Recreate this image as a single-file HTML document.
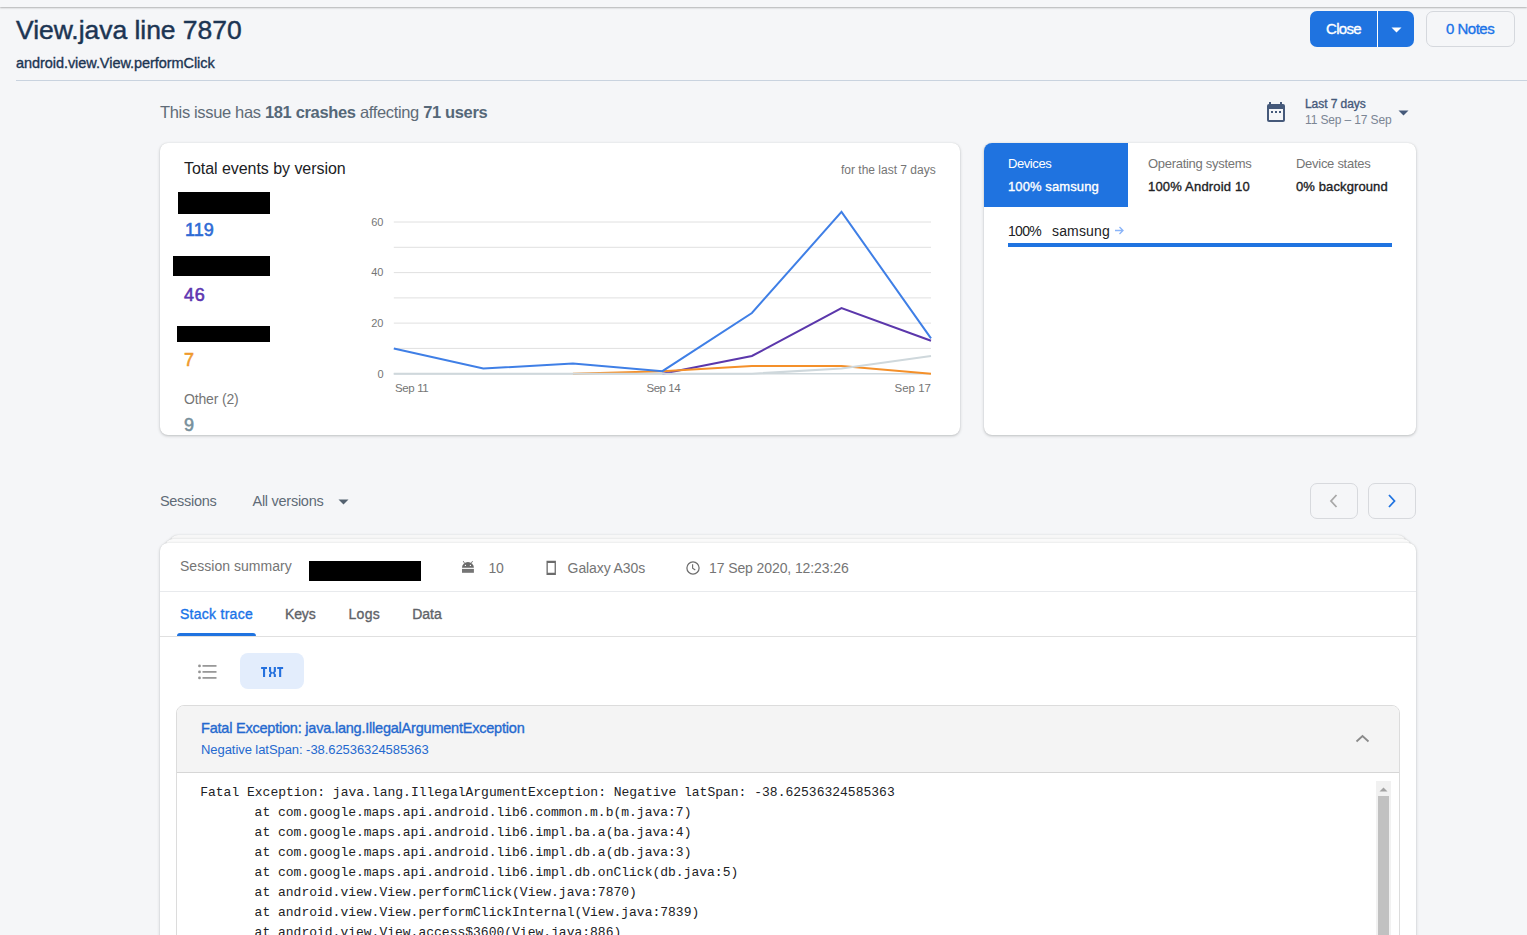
<!DOCTYPE html>
<html><head><meta charset="utf-8">
<style>
html,body{margin:0;padding:0;}
body{width:1527px;height:935px;overflow:hidden;background:#f5f6f8;font-family:"Liberation Sans",sans-serif;position:relative;}
.abs{position:absolute;}
.t{position:absolute;white-space:pre;}
.t b{font-weight:bold;color:#566878}
.topbar{left:0;top:0;width:1527px;height:7px;background:#f5f6f8;box-shadow:0 1px 2px rgba(0,0,0,.28);z-index:2}
.hr{left:16px;top:80px;width:1511px;height:1px;background:#c9d3df}
.btnc{left:1310px;top:11px;width:104px;height:36px;background:#1f73e0;border-radius:7px}
.btnsep{left:1377px;top:11px;width:1px;height:36px;background:#fff}
.notes{left:1426px;top:11px;width:87px;height:34px;border:1px solid #d5d8dd;border-radius:7px}
.card{background:#fff;border-radius:8px;box-shadow:0 1px 3px rgba(60,64,67,.3),0 0 1px rgba(60,64,67,.15)}
.blk{background:#000}
.navbtn{width:46px;height:34px;border:1px solid #d7d9dd;border-radius:7px}
</style></head><body>
<div class="abs topbar"></div>
<div class="abs hr"></div>
<div class="abs btnc"></div>
<div class="abs btnsep"></div>
<svg class="abs" style="left:1391px;top:27px" width="11" height="6"><path d="M0.5 0.5h10l-5 5z" fill="#fff"/></svg>
<div class="abs notes"></div>

<!-- calendar -->
<svg class="abs" style="left:1266px;top:101px" width="21" height="22" viewBox="0 0 21 22">
<rect x="3" y="1" width="2" height="3" fill="#45597a"/><rect x="14" y="1" width="2" height="3" fill="#45597a"/>
<rect x="1" y="3" width="18" height="18" rx="2" fill="#45597a"/>
<rect x="3" y="8" width="14" height="11" fill="#f5f6f8"/>
<rect x="5" y="10" width="2" height="2" fill="#45597a"/><rect x="9" y="10" width="2" height="2" fill="#45597a"/><rect x="13" y="10" width="2" height="2" fill="#45597a"/>
</svg>
<svg class="abs" style="left:1398px;top:110px" width="11" height="6"><path d="M0.5 0.5h10l-5 5z" fill="#45597a"/></svg>

<!-- card 1 -->
<div class="abs card" style="left:160px;top:143px;width:800px;height:292px"></div>
<div class="abs blk" style="left:178px;top:192px;width:92px;height:22px"></div>
<div class="abs blk" style="left:173px;top:256px;width:97px;height:20px"></div>
<div class="abs blk" style="left:177px;top:326px;width:93px;height:16px"></div>

<!-- card 2 -->
<div class="abs card" style="left:984px;top:143px;width:432px;height:292px;overflow:hidden">
  <div class="abs" style="left:0;top:0;width:144px;height:64px;background:#1f73e0"></div>
</div>
<svg class="abs" style="left:1114px;top:225px" width="11" height="11" viewBox="0 0 11 11"><path d="M1 5.5h8M5.5 2l3.5 3.5-3.5 3.5" stroke="#8ab4f8" stroke-width="1.3" fill="none"/></svg>
<div class="abs" style="left:1008px;top:243px;width:384px;height:4px;background:#1f73e0"></div>

<!-- sessions header -->
<svg class="abs" style="left:338px;top:499px" width="11" height="6"><path d="M0.5 0.5h10l-5 5z" fill="#546270"/></svg>
<div class="abs navbtn" style="left:1310px;top:483px"></div>
<div class="abs navbtn" style="left:1368px;top:483px"></div>
<svg class="abs" style="left:1326px;top:492px" width="16" height="18" viewBox="0 0 16 18"><path d="M10.5 3l-5.5 6 5.5 6" stroke="#a8a8a8" stroke-width="1.8" fill="none"/></svg>
<svg class="abs" style="left:1384px;top:492px" width="16" height="18" viewBox="0 0 16 18"><path d="M5 3l5.5 6-5.5 6" stroke="#1f73e0" stroke-width="1.8" fill="none"/></svg>

<!-- stacked session card -->
<div class="abs card" style="left:170px;top:535px;width:1236px;height:30px;border-radius:8px;background:#f7f7f7"></div>
<div class="abs card" style="left:165px;top:539px;width:1246px;height:30px;border-radius:8px;background:#fafafa"></div>
<div class="abs card" style="left:160px;top:543px;width:1256px;height:420px;border-radius:8px 8px 0 0"></div>
<div class="abs" style="left:160px;top:591px;width:1256px;height:1px;background:#e8eaed"></div>
<div class="abs" style="left:160px;top:636px;width:1256px;height:1px;background:#e0e0e0"></div>
<div class="abs" style="left:177px;top:633px;width:79px;height:3px;background:#1f73e0;border-radius:3px 3px 0 0"></div>
<div class="abs blk" style="left:309px;top:561px;width:112px;height:20px"></div>

<!-- android icon -->
<svg class="abs" style="left:456px;top:555px" width="26" height="25" viewBox="0 0 26 25">
<path d="M7.2 6.1l1.5 2.3M16.6 6.1l-1.5 2.3" stroke="#6b6b6b" stroke-width="0.9"/>
<path d="M6 12.7A5.95 5.6 0 0 1 17.9 12.7Z" fill="#6b6b6b"/>
<circle cx="9.4" cy="10.4" r="0.65" fill="#fff"/><circle cx="14.4" cy="10.4" r="0.65" fill="#fff"/>
<rect x="6" y="13.9" width="11.9" height="3.9" fill="#757575"/>
</svg>
<!-- phone icon -->
<svg class="abs" style="left:540px;top:555px" width="26" height="25" viewBox="0 0 26 25">
<path fill-rule="evenodd" fill="#6b6b6b" d="M6.5 5.8H15.9V19.9H6.5Z M7.8 7.9V17.8H14.6V7.9Z"/>
</svg>
<!-- clock icon -->
<svg class="abs" style="left:685px;top:560px" width="16" height="16" viewBox="0 0 16 16">
<circle cx="8" cy="8" r="6.1" stroke="#6e6e6e" stroke-width="1.25" fill="none"/>
<path d="M7.6 4.3V8.3l2.7 1.8" stroke="#6e6e6e" stroke-width="1.15" fill="none"/>
</svg>
<!-- list icon -->
<svg class="abs" style="left:192px;top:658px" width="30" height="28" viewBox="0 0 30 28">
<circle cx="7.5" cy="7.9" r="1.4" fill="#949494"/><circle cx="7.5" cy="13.9" r="1.4" fill="#949494"/><circle cx="7.5" cy="19.9" r="1.4" fill="#949494"/>
<rect x="10.5" y="7.05" width="14" height="1.7" fill="#949494"/><rect x="10.5" y="13.05" width="14" height="1.7" fill="#949494"/><rect x="10.5" y="19.05" width="14" height="1.7" fill="#949494"/>
</svg>
<!-- txt icon -->
<svg class="abs" style="left:240px;top:650px;z-index:3" width="70" height="40" viewBox="0 0 70 40">
<g fill="#2571de">
<rect x="21.1" y="17" width="5.9" height="2"/><rect x="23" y="17" width="2.1" height="10"/>
<path d="M29 17h2.1v4.2l0.9 1h0.9l0.9-1V17h2.1v4.6l-1.3 1.4 1.3 1.4V27h-2.1v-2.6l-0.9-1h-0.9l-0.9 1V27H29v-2.6l1.3-1.4L29 21.6z"/>
<rect x="37.2" y="17" width="5.9" height="2"/><rect x="39.1" y="17" width="2.1" height="10"/>
</g>
</svg>
<div class="abs" style="left:240px;top:653px;width:64px;height:36px;background:#e3edfc;border-radius:8px"></div>

<!-- exception panel -->
<div class="abs" style="left:176px;top:705px;width:1222px;height:240px;border:1px solid #dcdcdc;border-radius:8px 8px 0 0;background:#fff"></div>
<div class="abs" style="left:177px;top:706px;width:1222px;height:66px;background:#f4f4f4;border-radius:7px 7px 0 0;border-bottom:1px solid #d6d6d6"></div>
<svg class="abs" style="left:1355px;top:732px" width="15" height="12" viewBox="0 0 15 12"><path d="M1.5 9.5l6-5.5 6 5.5" stroke="#8a8a8a" stroke-width="1.8" fill="none"/></svg>
<div class="abs" style="left:1376px;top:781px;width:15px;height:160px;background:#f1f1f1"></div>
<svg class="abs" style="left:1376px;top:784px" width="15" height="10"><path d="M3.5 7.5h8l-4-4z" fill="#a3a3a3"/></svg>
<div class="abs" style="left:1378px;top:796px;width:11px;height:140px;background:#c1c1c1"></div>

<svg class="abs" style="left:0;top:0" width="1527" height="935" viewBox="0 0 1527 935">
<line x1="393.8" x2="931" y1="348.4" y2="348.4" stroke="#e0e0e0" stroke-width="1"/><line x1="393.8" x2="931" y1="323.1" y2="323.1" stroke="#e0e0e0" stroke-width="1"/><line x1="393.8" x2="931" y1="297.9" y2="297.9" stroke="#e0e0e0" stroke-width="1"/><line x1="393.8" x2="931" y1="272.6" y2="272.6" stroke="#e0e0e0" stroke-width="1"/><line x1="393.8" x2="931" y1="247.3" y2="247.3" stroke="#e0e0e0" stroke-width="1"/><line x1="393.8" x2="931" y1="222.0" y2="222.0" stroke="#e0e0e0" stroke-width="1"/>
<line x1="393.8" x2="931" y1="373.7" y2="373.7" stroke="#cfd8dc" stroke-width="1.5"/>
<polyline fill="none" stroke="#5b37ab" stroke-width="2" points="662.4,373.7 751.9,356.0 841.5,308.0 931.0,340.8"/>
<polyline fill="none" stroke="#f4902a" stroke-width="2" points="572.9,373.7 662.4,371.2 751.9,366.1 841.5,366.1 931.0,373.7"/>
<polyline fill="none" stroke="#cfd8dc" stroke-width="2" points="393.8,373.7 483.3,373.7 572.9,373.7 662.4,373.7 751.9,373.7 841.5,368.6 931.0,356.0"/>
<polyline fill="none" stroke="#3f7fe6" stroke-width="2" points="393.8,348.4 483.3,368.6 572.9,363.6 662.4,371.2 751.9,313.0 841.5,211.9 931.0,338.3"/>
</svg>
<div class="t" id="title" style="top:17.07px;font-size:26.5px;line-height:26.5px;color:#1c3553;-webkit-text-stroke:0.45px #1c3553;letter-spacing:-0.040px;left:16.00px;">View.java line 7870</div>
<div class="t" id="sub" style="top:56.23px;font-size:14.5px;line-height:14.5px;color:#1c3553;-webkit-text-stroke:0.35px #1c3553;letter-spacing:-0.059px;left:16.00px;">android.view.View.performClick</div>
<div class="t" id="close" style="top:20.80px;font-size:15px;line-height:15px;color:#ffffff;-webkit-text-stroke:0.35px #ffffff;letter-spacing:-0.665px;left:1326.00px;">Close</div>
<div class="t" id="notes" style="top:20.80px;font-size:15px;line-height:15px;color:#1a73e8;-webkit-text-stroke:0.35px #1a73e8;letter-spacing:-0.499px;left:1446.00px;">0 Notes</div>
<div class="t" id="sum1" style="top:103.53px;font-size:16.5px;line-height:16.5px;color:#5f6b77;letter-spacing:-0.343px;left:160.00px;">This issue has <b>181 crashes</b> affecting <b>71 users</b></div>
<div class="t" id="last7" style="top:98.34px;font-size:12px;line-height:12px;color:#45597a;-webkit-text-stroke:0.35px #45597a;letter-spacing:-0.068px;left:1305.00px;">Last 7 days</div>
<div class="t" id="range" style="top:114.34px;font-size:12px;line-height:12px;color:#7b8594;letter-spacing:-0.131px;left:1305.00px;">11 Sep – 17 Sep</div>
<div class="t" id="tev" style="top:160.96px;font-size:16px;line-height:16px;color:#202124;letter-spacing:-0.048px;left:184.00px;">Total events by version</div>
<div class="t" id="f7" style="top:164.34px;font-size:12px;line-height:12px;color:#757575;letter-spacing:-0.001px;left:841.00px;">for the last 7 days</div>
<div class="t" id="n119" style="top:220.76px;font-size:18px;line-height:18px;color:#2f6bd5;-webkit-text-stroke:0.6px #2f6bd5;letter-spacing:-0.003px;left:185.00px;">119</div>
<div class="t" id="n46" style="top:286.26px;font-size:18px;line-height:18px;color:#5e35b1;-webkit-text-stroke:0.6px #5e35b1;letter-spacing:0.675px;left:184.00px;">46</div>
<div class="t" id="n7" style="top:351.26px;font-size:18px;line-height:18px;color:#ef9a2c;-webkit-text-stroke:0.6px #ef9a2c;letter-spacing:-1.285px;left:184.00px;">7</div>
<div class="t" id="oth" style="top:391.65px;font-size:14px;line-height:14px;color:#757575;letter-spacing:-0.165px;left:184.00px;">Other (2)</div>
<div class="t" id="n9" style="top:415.76px;font-size:18px;line-height:18px;color:#78909c;-webkit-text-stroke:0.6px #78909c;letter-spacing:-1.285px;left:184.00px;">9</div>
<div class="t" id="y60" style="top:217.19px;font-size:11px;line-height:11px;color:#757575;right:1143.50px;">60</div>
<div class="t" id="y40" style="top:267.49px;font-size:11px;line-height:11px;color:#757575;right:1143.50px;">40</div>
<div class="t" id="y20" style="top:318.39px;font-size:11px;line-height:11px;color:#757575;right:1143.50px;">20</div>
<div class="t" id="y0" style="top:368.89px;font-size:11px;line-height:11px;color:#757575;right:1143.50px;">0</div>
<div class="t" id="x11" style="top:382.77px;font-size:11.5px;line-height:11.5px;color:#757575;letter-spacing:-0.382px;left:395.00px;">Sep 11</div>
<div class="t" id="x14" style="top:382.77px;font-size:11.5px;line-height:11.5px;color:#757575;letter-spacing:-0.431px;left:646.40px;">Sep 14</div>
<div class="t" id="x17" style="top:382.77px;font-size:11.5px;line-height:11.5px;color:#757575;right:596.00px;">Sep 17</div>
<div class="t" id="dev" style="top:156.50px;font-size:13px;line-height:13px;color:#ffffff;letter-spacing:-0.425px;left:1008.00px;">Devices</div>
<div class="t" id="devv" style="top:180.00px;font-size:13px;line-height:13px;color:#ffffff;-webkit-text-stroke:0.35px #ffffff;letter-spacing:0.098px;left:1008.00px;">100% samsung</div>
<div class="t" id="os" style="top:156.50px;font-size:13px;line-height:13px;color:#757575;letter-spacing:-0.293px;left:1148.00px;">Operating systems</div>
<div class="t" id="osv" style="top:180.00px;font-size:13px;line-height:13px;color:#202124;-webkit-text-stroke:0.35px #202124;letter-spacing:0.191px;left:1148.00px;">100% Android 10</div>
<div class="t" id="ds" style="top:156.50px;font-size:13px;line-height:13px;color:#757575;letter-spacing:-0.278px;left:1296.00px;">Device states</div>
<div class="t" id="dsv" style="top:180.00px;font-size:13px;line-height:13px;color:#202124;-webkit-text-stroke:0.35px #202124;letter-spacing:0.113px;left:1296.00px;">0% background</div>
<div class="t" id="p100" style="top:223.65px;font-size:14px;line-height:14px;color:#202124;letter-spacing:-0.704px;left:1008.00px;">100%</div>
<div class="t" id="sams" style="top:223.65px;font-size:14px;line-height:14px;color:#202124;letter-spacing:0.148px;left:1052.00px;">samsung</div>
<div class="t" id="sess" style="top:494.23px;font-size:14.5px;line-height:14.5px;color:#5f6b77;letter-spacing:-0.306px;left:160.00px;">Sessions</div>
<div class="t" id="allv" style="top:494.23px;font-size:14.5px;line-height:14.5px;color:#5f6b77;letter-spacing:-0.267px;left:252.50px;">All versions</div>
<div class="t" id="ssum" style="top:559.15px;font-size:14px;line-height:14px;color:#757575;letter-spacing:0.031px;left:180.00px;">Session summary</div>
<div class="t" id="ten" style="top:560.65px;font-size:14px;line-height:14px;color:#757575;letter-spacing:-0.374px;left:488.50px;">10</div>
<div class="t" id="gal" style="top:560.65px;font-size:14px;line-height:14px;color:#757575;letter-spacing:-0.101px;left:567.60px;">Galaxy A30s</div>
<div class="t" id="date" style="top:560.65px;font-size:14px;line-height:14px;color:#757575;letter-spacing:-0.099px;left:709.00px;">17 Sep 2020, 12:23:26</div>
<div class="t" id="tab1" style="top:606.65px;font-size:14px;line-height:14px;color:#1a73e8;-webkit-text-stroke:0.35px #1a73e8;letter-spacing:0.267px;left:180.00px;">Stack trace</div>
<div class="t" id="tab2" style="top:606.65px;font-size:14px;line-height:14px;color:#5f6368;-webkit-text-stroke:0.35px #5f6368;letter-spacing:-0.144px;left:285.00px;">Keys</div>
<div class="t" id="tab3" style="top:606.65px;font-size:14px;line-height:14px;color:#5f6368;-webkit-text-stroke:0.35px #5f6368;letter-spacing:0.243px;left:348.60px;">Logs</div>
<div class="t" id="tab4" style="top:606.65px;font-size:14px;line-height:14px;color:#5f6368;-webkit-text-stroke:0.35px #5f6368;letter-spacing:-0.026px;left:412.20px;">Data</div>
<div class="t" id="fe" style="top:720.73px;font-size:14.5px;line-height:14.5px;color:#2469cf;-webkit-text-stroke:0.35px #2469cf;letter-spacing:-0.216px;left:201.00px;">Fatal Exception: java.lang.IllegalArgumentException</div>
<div class="t" id="neg" style="top:742.50px;font-size:13px;line-height:13px;color:#2469cf;letter-spacing:-0.062px;left:201.00px;">Negative latSpan: -38.62536324585363</div>
<div class="t" id="st0" style="top:785.54px;font-size:13px;line-height:13px;color:#202124;font-family:'Liberation Mono',monospace;letter-spacing:0.002px;left:200.20px;">Fatal Exception: java.lang.IllegalArgumentException: Negative latSpan: -38.62536324585363</div>
<div class="t" id="st1" style="top:805.54px;font-size:13px;line-height:13px;color:#202124;font-family:'Liberation Mono',monospace;left:254.60px;">at com.google.maps.api.android.lib6.common.m.b(m.java:7)</div>
<div class="t" id="st2" style="top:825.54px;font-size:13px;line-height:13px;color:#202124;font-family:'Liberation Mono',monospace;left:254.60px;">at com.google.maps.api.android.lib6.impl.ba.a(ba.java:4)</div>
<div class="t" id="st3" style="top:845.54px;font-size:13px;line-height:13px;color:#202124;font-family:'Liberation Mono',monospace;left:254.60px;">at com.google.maps.api.android.lib6.impl.db.a(db.java:3)</div>
<div class="t" id="st4" style="top:865.54px;font-size:13px;line-height:13px;color:#202124;font-family:'Liberation Mono',monospace;left:254.60px;">at com.google.maps.api.android.lib6.impl.db.onClick(db.java:5)</div>
<div class="t" id="st5" style="top:885.54px;font-size:13px;line-height:13px;color:#202124;font-family:'Liberation Mono',monospace;left:254.60px;">at android.view.View.performClick(View.java:7870)</div>
<div class="t" id="st6" style="top:905.54px;font-size:13px;line-height:13px;color:#202124;font-family:'Liberation Mono',monospace;left:254.60px;">at android.view.View.performClickInternal(View.java:7839)</div>
<div class="t" id="st7" style="top:925.54px;font-size:13px;line-height:13px;color:#202124;font-family:'Liberation Mono',monospace;left:254.60px;">at android.view.View.access$3600(View.java:886)</div>
<div class="t" id="st8" style="top:945.54px;font-size:13px;line-height:13px;color:#202124;font-family:'Liberation Mono',monospace;left:254.60px;">at android.view.View$PerformClick.run(View.java:29363)</div>
</body></html>
